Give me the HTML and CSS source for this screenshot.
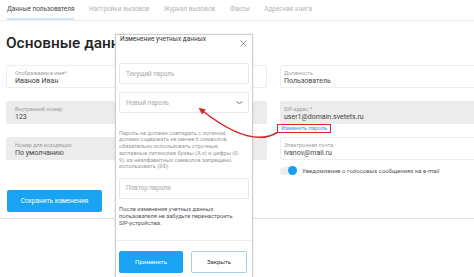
FILE: index.html
```html
<!DOCTYPE html>
<html lang="ru">
<head>
<meta charset="utf-8">
<title>Данные пользователя</title>
<link rel="stylesheet" href="styles.css">
</head>
<body>
<div class="page">
  <nav class="tabs">
    <span class="tab active">Данные пользователя</span>
    <span class="tab">Настройки вызовов</span>
    <span class="tab">Журнал вызовов</span>
    <span class="tab">Факсы</span>
    <span class="tab">Адресная книга</span>
  </nav>
  <h1 class="title">Основные данные</h1>
  <div class="form">
    <div class="col">
      <div class="field">
        <div class="label">Отображаемое имя*</div>
        <div class="value">Иванов Иван</div>
      </div>
      <div class="field field-gray">
        <div class="label">Внутренний номер</div>
        <div class="value">123</div>
      </div>
      <div class="field field-gray">
        <div class="label">Номер для исходящих</div>
        <div class="value">По умолчанию</div>
      </div>
      <button class="btn-save">Сохранить изменения</button>
    </div>
    <div class="col col-right">
      <div class="field">
        <div class="label">Должность</div>
        <div class="value">Пользователь</div>
      </div>
      <div class="field field-gray">
        <div class="label">SIP-адрес *</div>
        <div class="value">user1@domain.svetets.ru</div>
      </div>
      <a class="link">Изменить пароль</a>
      <div class="field">
        <div class="label">Электронная почта</div>
        <div class="value">ivanov@mail.ru</div>
      </div>
      <div class="toggle-row">
        <span class="toggle"><span class="knob"></span></span>
        <span class="toggle-text">Уведомление о голосовых сообщениях на e-mail</span>
      </div>
    </div>
  </div>
</div>

<div class="modal">
  <div class="modal-head">
    <span class="modal-title">Изменение учетных данных</span>
    <svg class="close" width="7" height="7" viewBox="0 0 7 7"><path d="M0.5 0.5L6.5 6.5M6.5 0.5L0.5 6.5" stroke="#777" stroke-width="0.8" fill="none"/></svg>
  </div>
  <div class="input">Текущий пароль</div>
  <div class="input input-second">
    <span>Новый пароль</span>
    <svg class="chev" width="7" height="4" viewBox="0 0 7 4"><path d="M0.5 0.8Q3.5 3.8 6.5 0.8" stroke="#555" stroke-width="0.8" fill="none"/></svg>
  </div>
  <p class="hint">Пароль не должен совпадать с логином,<br>должен содержать не менее 6 символов,<br>обязательно использовать строчные,<br>заглавные латинские буквы (A-z) и цифры (0-<br>9), из неалфавитных символов запрещено<br>использовать ($Ф)</p>
  <div class="input input-third">Повтор пароля</div>
  <p class="note">После изменения учетных данных<br>пользователя не забудьте перенастроить<br>SIP-устройства.</p>
  <div class="modal-foot">
    <button class="btn-apply">Применить</button>
    <button class="btn-close">Закрыть</button>
  </div>
</div>

<svg class="arrow" width="474" height="277" viewBox="0 0 474 277">
  <path d="M278 132 Q252 149 204 112" stroke="#d8232a" stroke-width="1.5" fill="none"/>
  <polygon points="198.5,107.7 202.2,114.4 205.9,109.6" fill="#d8232a"/>
</svg>
</body>
</html>
```

FILE: styles.css
```css
* { box-sizing: border-box; }

html, body {
  margin: 0;
  padding: 0;
  width: 474px;
  height: 277px;
  overflow: hidden;
  background: #fff;
  font-family: Roboto, "Noto Sans", Arial, sans-serif;
  color: #333;
}

.page {
  position: relative;
  width: 474px;
}

.tabs {
  display: flex;
  gap: 14.5px;
  padding-left: 7px;
  height: 21px;
  border-bottom: 1px solid #ececec;
}

.tab {
  font-size: 6.4px;
  line-height: 8px;
  padding-top: 5px;
  height: 20px;
  color: #b4b4b4;
  white-space: nowrap;
}

.tab.active {
  color: #444;
  border-bottom: 2px solid #cfe6f6;
}

.title {
  margin: 12px 0 0;
  padding-left: 6px;
  width: 115px;
  overflow: hidden;
  font-size: 15.4px;
  line-height: 20px;
  font-weight: 500;
  color: #222;
  white-space: nowrap;
}

.form {
  display: flex;
  gap: 13px;
  padding: 0 6px 6px;
  margin-top: 12px;
  border-bottom: 1px solid #e2e2e2;
  width: 474px;
  overflow: hidden;
}

.col {
  display: flex;
  flex-direction: column;
  width: 261px;
  flex: none;
}

.field {
  height: 23px;
  padding: 4px 8px 0;
  border: 1px solid #ededed;
  border-radius: 2px;
  background: #fff;
}

.field + .field { margin-top: 13px; }

.field-gray {
  background: #ececec;
  border-color: #ececec;
}

.col-right .field { padding-left: 3px; }

.label {
  font-size: 5.4px;
  line-height: 7px;
  color: #a0a0a0;
  white-space: nowrap;
}

.value {
  font-size: 7px;
  line-height: 9px;
  color: #444;
  white-space: nowrap;
}

.btn-save {
  margin-top: 30px;
  width: 95px;
  height: 22px;
  margin-left: 1px;
  border: none;
  border-radius: 2px;
  background: #1aa3f2;
  color: #fff;
  font-family: inherit;
  font-size: 6.5px;
  padding: 0;
}

.link {
  align-self: flex-start;
  margin-left: -3px;
  height: 9px;
  margin-bottom: 4px;
  padding: 0 3px;
  border: 1px solid #e0282c;
  font-size: 5.6px;
  line-height: 7px;
  color: #1a9ff0;
  white-space: nowrap;
}

.toggle-row {
  display: flex;
  align-items: center;
  gap: 5px;
  margin-top: 6px;
  height: 9px;
}

.toggle {
  width: 17px;
  height: 8px;
  border-radius: 4px;
  background: #eeeeee;
  display: flex;
  justify-content: flex-end;
  align-items: center;
}

.knob {
  width: 9px;
  height: 9px;
  border-radius: 50%;
  background: #1a9ff0;
}

.toggle-text {
  font-size: 6px;
  line-height: 9px;
  color: #555;
  white-space: nowrap;
}

/* modal overlay */
.modal {
  position: absolute;
  left: 115px;
  top: 34px;
  width: 138px;
  height: 252px;
  background: #fff;
  border: 1px solid #cbcbcb;
  padding: 0 3px;
  box-shadow: 0 0 3px rgba(0, 0, 0, 0.08);
}

.modal-head {
  display: flex;
  justify-content: space-between;
  align-items: flex-start;
  height: 28px;
}

.modal-title {
  margin-left: 1px;
  font-size: 6.5px;
  line-height: 8px;
  color: #333;
  white-space: nowrap;
}

.close {
  margin-top: 5px;
  margin-right: 2px;
}

.input {
  height: 21px;
  border: 1px solid #e9e9e9;
  border-radius: 2px;
  padding: 0 5px 0 6px;
  display: flex;
  align-items: center;
  justify-content: space-between;
  font-size: 6.3px;
  color: #a8a8a8;
  white-space: nowrap;
}

.input-second { margin-top: 8px; }

.chev { margin-top: 1px; }

.hint {
  margin: 16.5px 0 0;
  font-size: 5.6px;
  line-height: 6.8px;
  color: #9a9a9a;
  white-space: nowrap;
}

.input-third { margin-top: 7.6px; }

.note {
  margin: 7.5px 0 0;
  font-size: 5.8px;
  line-height: 7px;
  color: #555;
  white-space: nowrap;
}

.modal-foot {
  display: flex;
  gap: 8px;
  margin: 12.5px -3px 0;
  padding: 10px 3px 0;
  border-top: 1px solid #ececec;
}

.btn-apply,
.btn-close {
  height: 22px;
  border-radius: 2px;
  font-family: inherit;
  font-size: 6px;
  padding: 0;
}

.btn-apply {
  width: 64px;
  border: none;
  background: #1aa3f2;
  color: #fff;
}

.btn-close {
  width: 56px;
  background: #fff;
  border: 1px solid #a9cfe8;
  color: #333;
}

.arrow {
  position: absolute;
  left: 0;
  top: 0;
  pointer-events: none;
}
```
